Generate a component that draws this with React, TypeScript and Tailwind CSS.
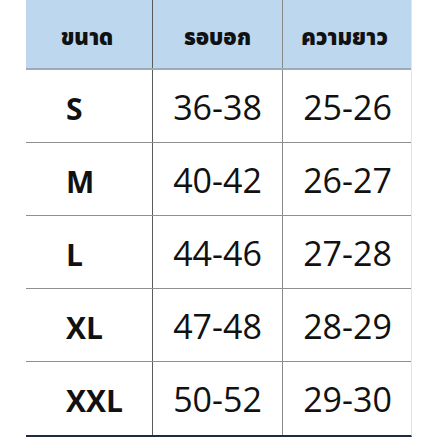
const rows = [
  { size: 'S', chest: '36-38', length: '25-26' },
  { size: 'M', chest: '40-42', length: '26-27' },
  { size: 'L', chest: '44-46', length: '27-28' },
  { size: 'XL', chest: '47-48', length: '28-29' },
  { size: 'XXL', chest: '50-52', length: '29-30' },
]

const App = () => {
  return (
    <div className="w-[437px] h-[437px] bg-white overflow-hidden font-['Open_Sans',sans-serif]">
      <div className="ml-[26px] w-[386px] border-r border-[#e4e4e4] border-b-2 border-b-[#1f2a44]">
        {/* Header */}
        <div className="grid grid-cols-[126px_130px_130px] h-[70px] bg-[#bdd7ee] border-b-2 border-[#9eaaba] text-[22px] font-black text-[#111] font-['Noto_Sans','Noto_Sans_Thai',sans-serif]">
          <div className="flex items-center justify-center pt-[4px] pr-[4px]">ขนาด</div>
          <div className="flex items-center justify-center pt-[4px] border-l border-[#5a5a5a]">รอบอก</div>
          <div className="flex items-center justify-center pt-[4px] pr-[6px] border-l border-[#8a8a8a]">ความยาว</div>
        </div>

        {/* Rows */}
        {rows.map((row, i) => (
          <div
            key={row.size}
            className={`grid grid-cols-[126px_130px_130px] h-[73px] text-[#111] ${i < rows.length - 1 ? 'border-b border-[#8f8f8f]' : ''}`}
          >
            <div className="flex items-center pl-[40px] pt-[4px] text-[30px] font-bold">{row.size}</div>
            <div className="flex items-center justify-center pt-[2px] text-[34px] border-l border-[#5a5a5a]">{row.chest}</div>
            <div className="flex items-center justify-center pt-[2px] text-[34px] border-l border-[#8a8a8a]">{row.length}</div>
          </div>
        ))}
      </div>
    </div>
  )
}

export default App
